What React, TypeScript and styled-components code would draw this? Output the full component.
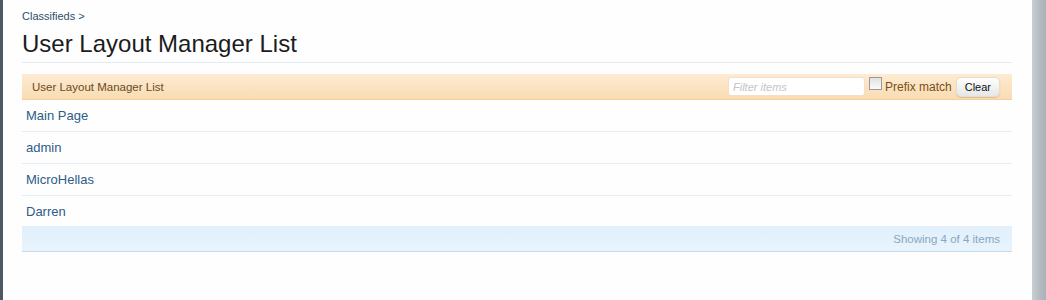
import styled, { createGlobalStyle } from "styled-components";

const GlobalStyle = createGlobalStyle`
    html, body {
        margin: 0;
        padding: 0;
        background: #ffffff;
    }
    body {
        font-family: "Liberation Sans", Arial, sans-serif;
    }
`;

const layouts = ["Main Page", "admin", "MicroHellas", "Darren"];

export default function App() {
    return (
        <>
            <GlobalStyle />
            <Frame>
                <Content>
                    <Breadcrumb>Classifieds &gt;</Breadcrumb>
                    <Title>User Layout Manager List</Title>

                    <Section>
                        <SectionHeader>
                            <HeaderLabel>User Layout Manager List</HeaderLabel>
                            <FilterControls>
                                <FilterInput placeholder="Filter items" />
                                <PrefixLabel>
                                    <Checkbox type="checkbox" />
                                    Prefix match
                                </PrefixLabel>
                                <ClearButton>Clear</ClearButton>
                            </FilterControls>
                        </SectionHeader>

                        <List>
                            {layouts.map((name) => (
                                <Row key={name}>
                                    <RowLink href="#">{name}</RowLink>
                                </Row>
                            ))}
                        </List>

                        <SectionFooter>Showing 4 of 4 items</SectionFooter>
                    </Section>
                </Content>
                <Scrollbar />
            </Frame>
        </>
    );
}

const Frame = styled.div`
    display: flex;
    height: 300px;
    border-left: 3px solid #4c5962;
    background: #fefeff;
    box-sizing: border-box;
`;

const Content = styled.div`
    flex: 1;
    padding: 8px 20px 0 19px;
    min-width: 0;
`;

const Scrollbar = styled.div`
    width: 14px;
    background: linear-gradient(to right, #c9cfd3, #b3bbc0 60%, #a9b1b6);
`;

const Breadcrumb = styled.div`
    font-size: 11px;
    line-height: 16px;
    color: #2e4d6a;
`;

const Title = styled.h1`
    margin: 5px 0 0;
    padding-bottom: 3px;
    font-size: 24px;
    line-height: 30px;
    font-weight: normal;
    color: #1c1c1c;
    border-bottom: 1px solid #e4ecf2;
`;

const Section = styled.div`
    margin-top: 11px;
`;

const SectionHeader = styled.div`
    display: flex;
    align-items: center;
    justify-content: space-between;
    height: 25px;
    padding: 0 12px 0 10px;
    background: linear-gradient(to bottom, #fdebd2, #f9dcb2);
    border-bottom: 1px solid #f6d09c;
`;

const HeaderLabel = styled.span`
    font-size: 11.5px;
    color: #6a4a22;
`;

const FilterControls = styled.div`
    display: flex;
    align-items: center;
`;

const FilterInput = styled.input`
    width: 137px;
    height: 19px;
    box-sizing: border-box;
    margin: 0 4px 0 0;
    padding: 0 4px;
    border: 1px solid #f1dfc6;
    border-radius: 3px;
    background: #ffffff;
    font-family: inherit;
    font-size: 11px;

    &::placeholder {
        color: #c4c4c4;
        font-style: italic;
    }
`;

const PrefixLabel = styled.label`
    display: flex;
    align-items: center;
    font-size: 12px;
    color: #7a4f18;
    margin-right: 4px;
`;

const Checkbox = styled.input`
    appearance: none;
    width: 13px;
    height: 13px;
    margin: 0 3px 6px 0;
    border: 1px solid #9a9a9a;
    background: linear-gradient(to bottom, #e2e2e2, #fafafa);
    box-sizing: border-box;
`;

const ClearButton = styled.button`
    height: 20px;
    padding: 0 8px;
    border: 1px solid #e8dccb;
    border-radius: 5px;
    background: linear-gradient(to bottom, #ffffff, #e6e6e6);
    font-family: inherit;
    font-size: 11px;
    color: #111;
    box-shadow: 0 1px 1px rgba(150, 120, 80, 0.3);
`;

const List = styled.div`
    display: flex;
    flex-direction: column;
`;

const Row = styled.div`
    height: 31px;
    display: flex;
    align-items: center;
    padding-left: 4px;
    border-bottom: 1px solid #e3edf3;

    &:last-child {
        border-bottom: none;
        height: 30px;
    }
`;

const RowLink = styled.a`
    font-size: 13px;
    color: #2d5c85;
    text-decoration: none;
`;

const SectionFooter = styled.div`
    height: 25px;
    display: flex;
    align-items: center;
    justify-content: flex-end;
    padding-right: 12px;
    font-size: 11.5px;
    color: #8aa7c0;
    background: linear-gradient(to bottom, #e1f0fc, #e8f4fd);
    border-bottom: 1px solid #c5dbea;
`;
